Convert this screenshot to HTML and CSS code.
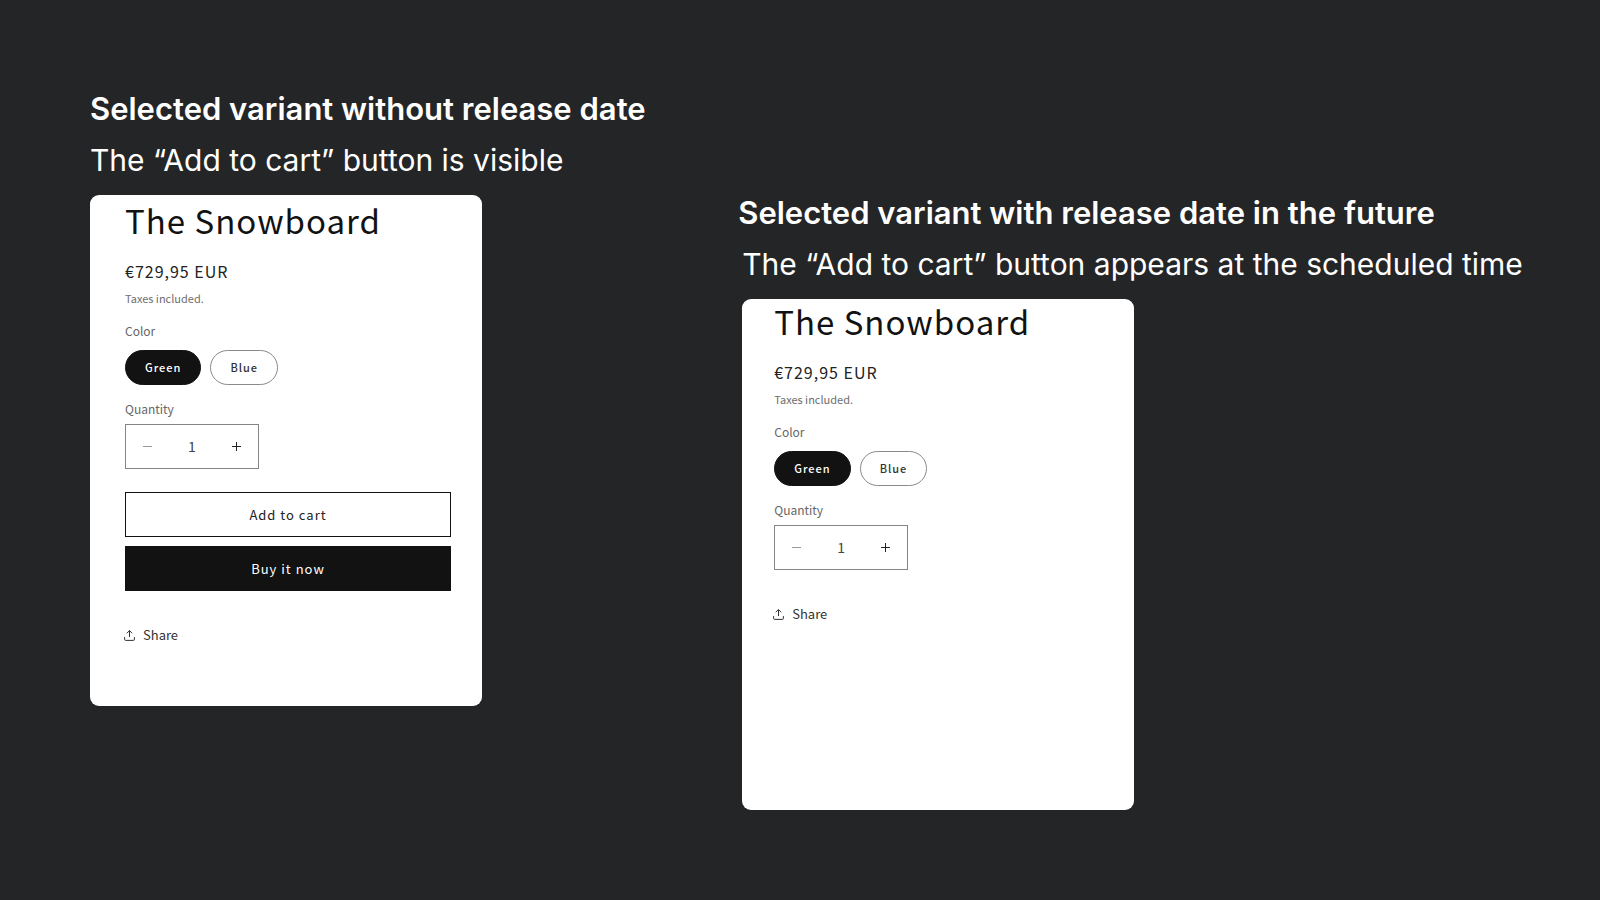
FILE: index.html
```html
<!DOCTYPE html>
<html lang="en">
<head>
  <meta charset="UTF-8" />
  <meta name="viewport" content="width=device-width, initial-scale=1.0" />
  <title>The Snowboard</title>
  <link rel="stylesheet" href="styles.css">
</head>
<body>
  <main class="compare">
    <section class="example">
      <h2>Selected variant without release date</h2>
      <p class="caption">The “Add to cart” button is visible</p>
      <form class="card">
        <h1>The Snowboard</h1>
        <p class="price">€729,95 EUR</p>
        <p class="taxes">Taxes included.</p>
        <fieldset class="variants">
          <legend>Color</legend>
          <div class="pills">
            <input type="radio" name="color" id="green-1" checked>
            <label for="green-1">Green</label>
            <input type="radio" name="color" id="blue-1">
            <label for="blue-1">Blue</label>
          </div>
        </fieldset>
        <label class="quantity-label" for="qty-1">Quantity</label>
        <div class="quantity">
          <button type="button" class="minus" aria-label="Decrease quantity" disabled>
            <svg width="9" height="9" viewBox="0 0 9 9"><path d="M0 4.5h9"/></svg>
          </button>
          <input type="text" id="qty-1" inputmode="numeric" value="1">
          <button type="button" class="plus" aria-label="Increase quantity">
            <svg width="9" height="9" viewBox="0 0 9 9"><path d="M0 4.5h9M4.5 0v9"/></svg>
          </button>
        </div>
        <div class="actions">
          <button type="button" class="btn">Add to cart</button>
          <button type="button" class="btn btn-dark">Buy it now</button>
        </div>
        <button type="button" class="share">
          <svg width="13" height="12" viewBox="0 0 13 12"><path d="M1.6 8.1v2.2a1.1 1.1 0 0 0 1.1 1.1h7.6a1.1 1.1 0 0 0 1.1-1.1V8.1M6.5 8.1V1.6M3.8 4.3l2.7-2.7 2.7 2.7"/></svg>
          Share
        </button>
      </form>
    </section>

    <section class="example example-future">
      <h2>Selected variant with release date in the future</h2>
      <p class="caption">The “Add to cart” button appears at the scheduled time</p>
      <form class="card">
        <h1>The Snowboard</h1>
        <p class="price">€729,95 EUR</p>
        <p class="taxes">Taxes included.</p>
        <fieldset class="variants">
          <legend>Color</legend>
          <div class="pills">
            <input type="radio" name="color" id="green-2" checked>
            <label for="green-2">Green</label>
            <input type="radio" name="color" id="blue-2">
            <label for="blue-2">Blue</label>
          </div>
        </fieldset>
        <label class="quantity-label" for="qty-2">Quantity</label>
        <div class="quantity">
          <button type="button" class="minus" aria-label="Decrease quantity" disabled>
            <svg width="9" height="9" viewBox="0 0 9 9"><path d="M0 4.5h9"/></svg>
          </button>
          <input type="text" id="qty-2" inputmode="numeric" value="1">
          <button type="button" class="plus" aria-label="Increase quantity">
            <svg width="9" height="9" viewBox="0 0 9 9"><path d="M0 4.5h9M4.5 0v9"/></svg>
          </button>
        </div>
        <button type="button" class="share">
          <svg width="13" height="12" viewBox="0 0 13 12"><path d="M1.6 8.1v2.2a1.1 1.1 0 0 0 1.1 1.1h7.6a1.1 1.1 0 0 0 1.1-1.1V8.1M6.5 8.1V1.6M3.8 4.3l2.7-2.7 2.7 2.7"/></svg>
          Share
        </button>
      </form>
    </section>
  </main>
</body>
</html>
```
FILE: styles.css
```css
* { box-sizing: border-box; }
body { margin: 0; background-color: #242527; color: #fff; font-family: Inter, sans-serif; }
h1, h2, p { margin: 0; font-weight: 400; }
button, input { font: inherit; color: inherit; letter-spacing: inherit; background: none; border: none; padding: 0; margin: 0; }
button { cursor: pointer; }
svg { fill: none; stroke: currentColor; display: block; }

.compare { display: grid; grid-template-columns: 17fr 21fr; align-items: start; padding: 83px 61px 83px 90px; }
.example h2 { font-size: 31px; font-weight: 600; line-height: 51px; }
.caption { font-size: 30px; line-height: 53px; margin-bottom: 8px; }
.example-future { margin-top: 104px; }
.example-future .caption, .example-future .card { margin-left: 4px; }

/* product card */
.card { max-width: 392px; min-height: 511px; padding: 3px 31px 40px 35px; border-radius: 9px; background-color: #fff; color: #121212; font-family: "Noto Sans CJK SC", sans-serif; }
.example-future .card { padding-top: 0; padding-left: 32px; }
.card h1 { font-size: 33px; line-height: 44px; letter-spacing: 1px; }
.price { margin-top: 19px; font-size: 16px; line-height: 20px; letter-spacing: 1px; color: #222; }
.taxes { margin-top: 9px; font-size: 11px; line-height: 16px; color: #6e6e6e; }

.variants { border: none; padding: 0; margin: 16px 0 0; }
.variants legend, .quantity-label { display: block; padding: 0; font-size: 12px; line-height: 18px; color: #666; }
.pills { display: flex; gap: 9px; margin-top: 10px; }
.pills input { position: absolute; opacity: 0; }
.pills label { height: 35px; padding: 0 19px; border: 1px solid #8a8a8a; border-radius: 18px; font-size: 11px; font-weight: 500; line-height: 33px; letter-spacing: 1px; color: #333; cursor: pointer; }
.pills input:checked + label { background-color: #121212; border-color: #121212; color: #fff; }

.quantity-label { margin-top: 15px; }
.quantity { display: flex; width: 134px; height: 45px; margin-top: 6px; border: 1px solid #858585; }
.quantity button { display: flex; align-items: center; justify-content: center; width: 43px; }
.quantity input { flex: 1; min-width: 0; padding-bottom: 2px; text-align: center; font-size: 14px; color: #444; }
.quantity .minus { color: #999; }
.quantity .plus { color: #222; }

.actions { display: grid; gap: 9px; margin-top: 23px; }
.btn { height: 45px; padding-bottom: 1px; border: 1px solid #121212; font-size: 13px; letter-spacing: 1px; color: #222; }
.btn-dark { background-color: #121212; color: #fff; }

.share { display: flex; align-items: center; gap: 7px; margin: 34px 0 0 -2px; font-size: 13px; line-height: 20px; color: #333; }
```
